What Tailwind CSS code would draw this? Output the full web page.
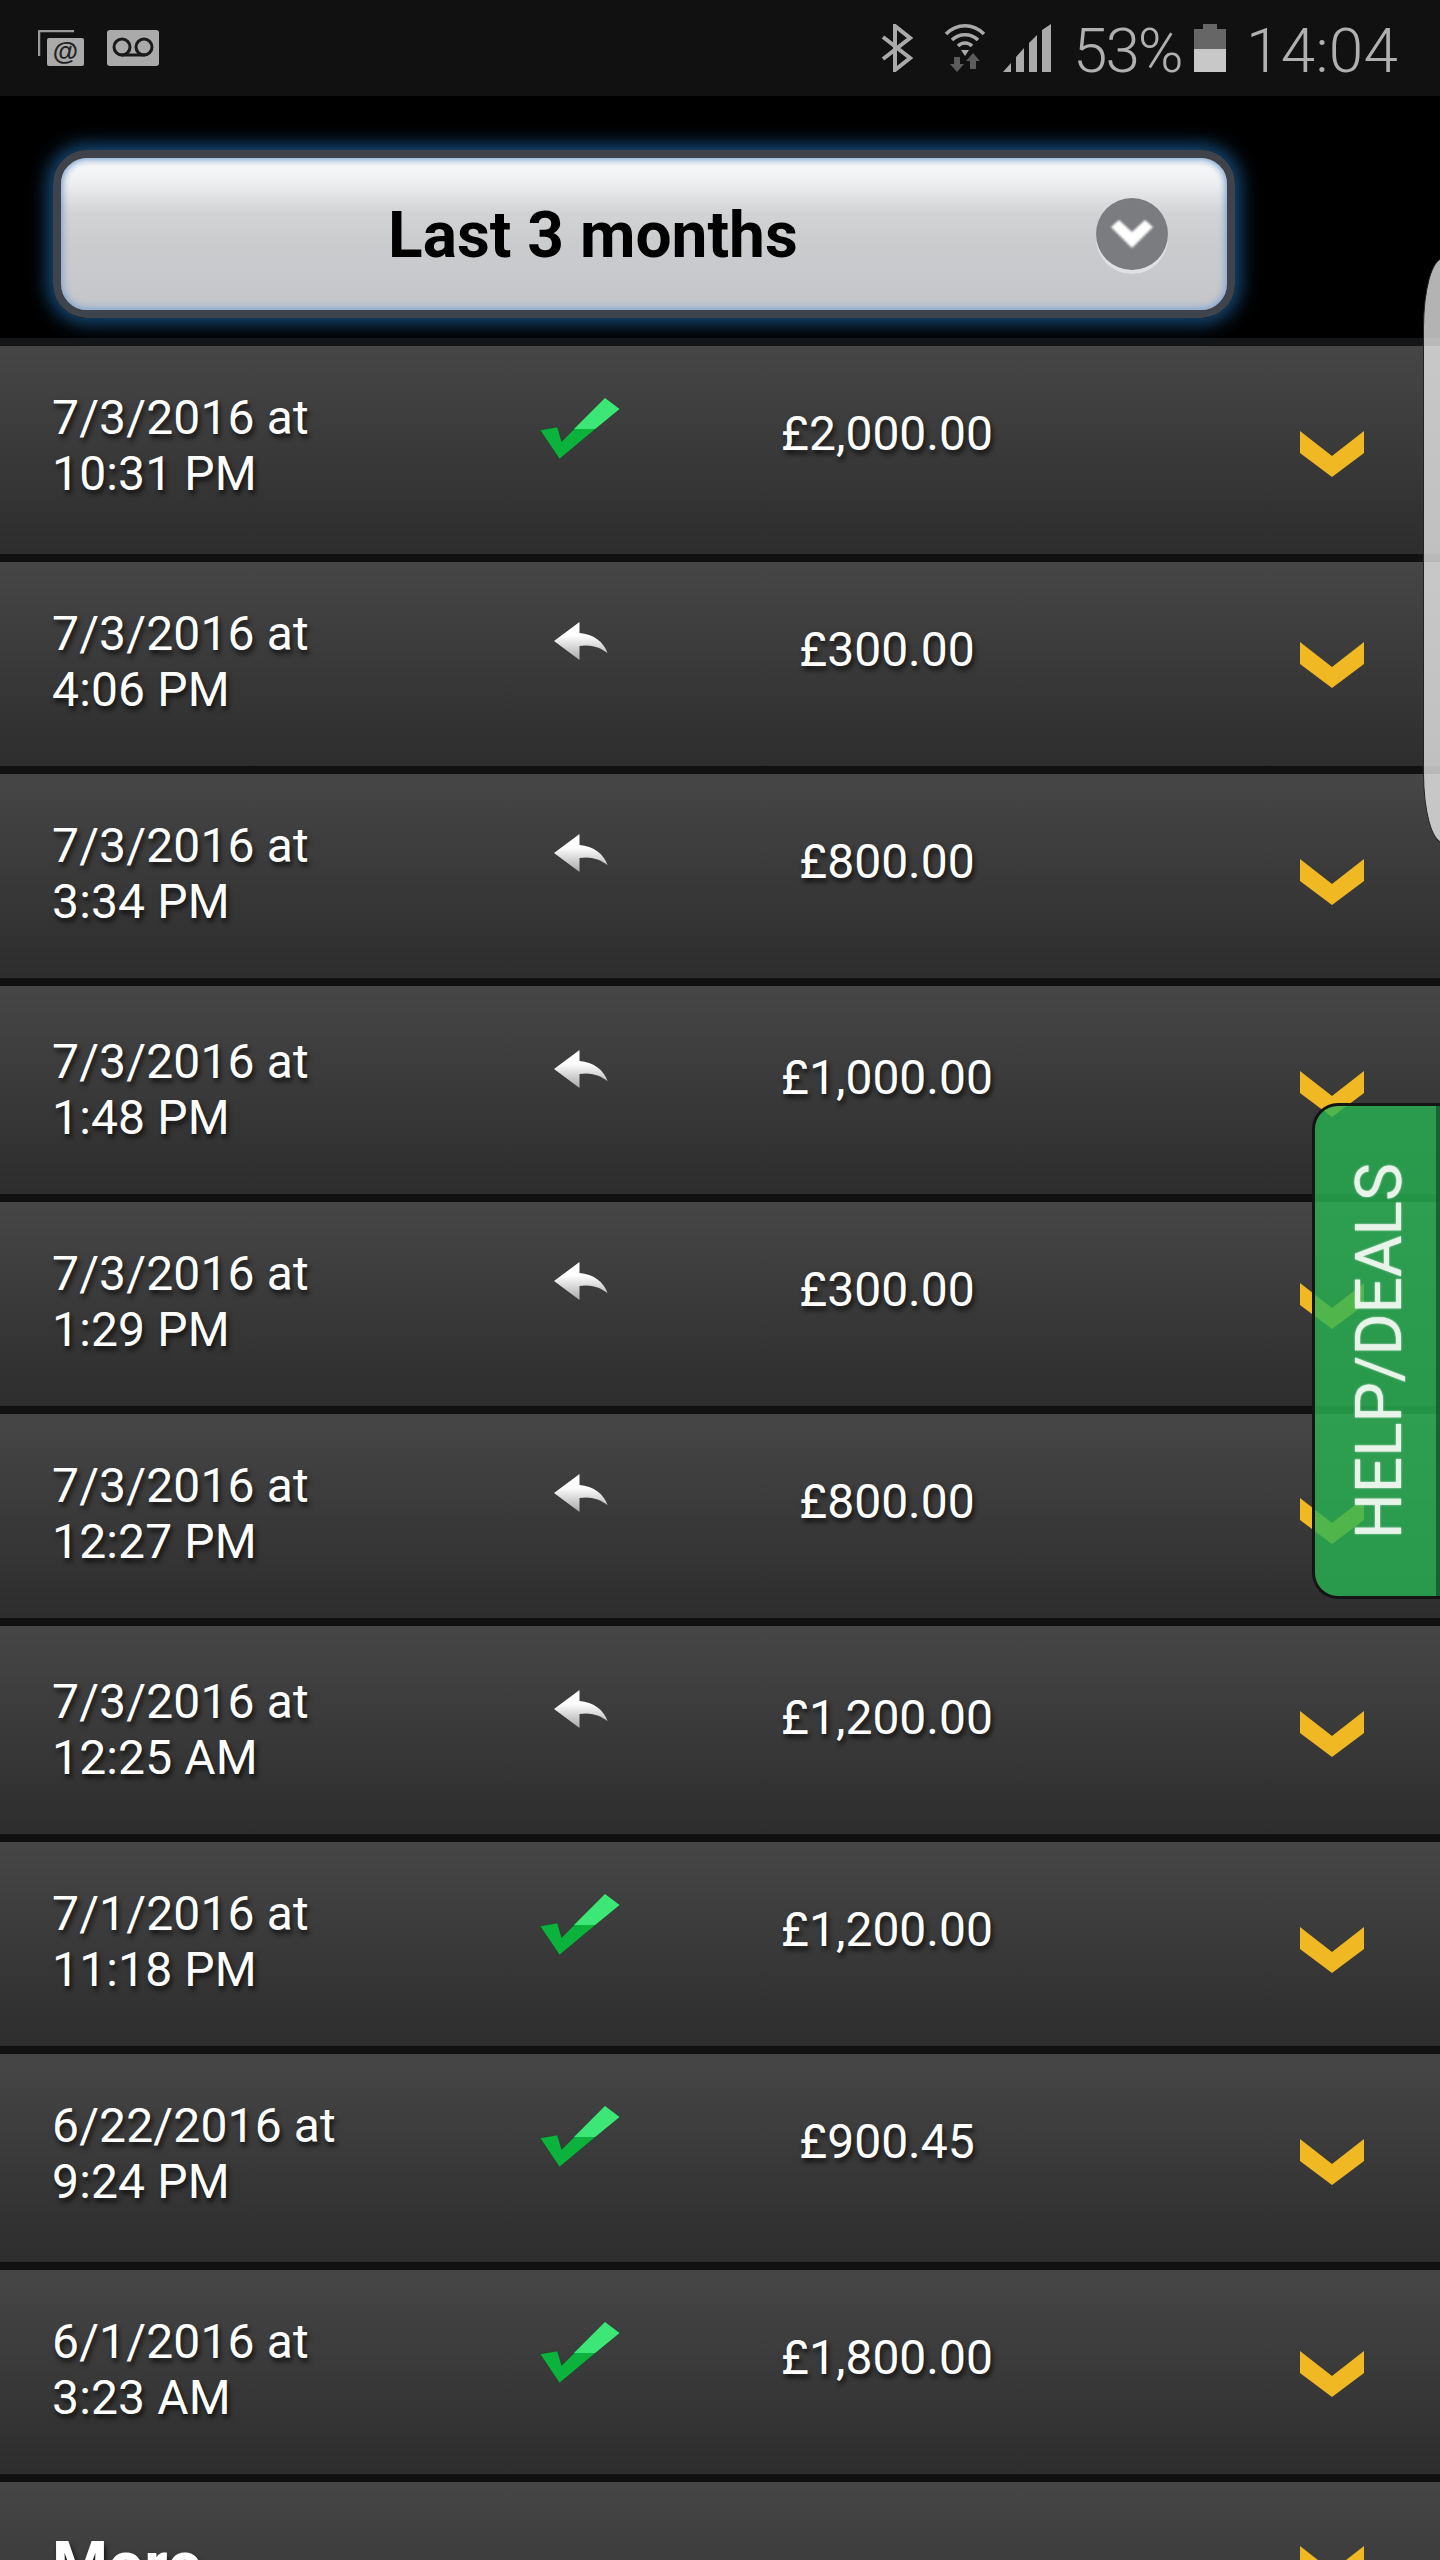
<!doctype html>
<html lang="en">
<head>
<meta charset="utf-8">
<title>Transactions</title>
<script src="https://cdn.jsdelivr.net/npm/@tailwindcss/browser@4"></script>
</head>
<body class="bg-black">
<svg width="0" height="0" class="absolute">
  <defs>
    <linearGradient id="reply-fill" x1="0" y1="0" x2="0" y2="1">
      <stop offset="0.35" stop-color="#ffffff"/>
      <stop offset="1" stop-color="#a8a8a8"/>
    </linearGradient>
    <symbol id="check" viewBox="0 0 80 62">
      <path d="M0 32 17.500 29 21.700 43.500 65 0 79.500 11 19.500 61Z" fill="#0bb23c" stroke="#222" stroke-opacity=".45" stroke-width=".8"/>
      <path d="M65 0 79.500 11 55 31 34 31Z" fill="#3de777"/>
    </symbol>
    <symbol id="reply" viewBox="0 0 54 38">
      <path d="M0 19 25.500 0 25.500 11C39 12 50 20 53.500 31 46 25 36 22 25.500 24L25.500 38Z" fill="url(#reply-fill)"/>
    </symbol>
    <symbol id="chevron" viewBox="0 0 64 46">
      <path d="M0 0 32 25 64 0 64 22 32 46 0 22Z" fill="#f0b823"/>
    </symbol>
  </defs>
</svg>

<div class="relative w-[1440px] h-[2560px] overflow-hidden font-['Roboto',sans-serif] text-white">

  <!-- status bar -->
  <div class="flex items-start h-[96px] bg-[#111111] text-[#b0b0b0]">
    <svg class="ml-[38px] mt-[30px]" width="46" height="36" viewBox="0 0 46 36">
      <path d="M1 26V2a1 1 0 0 1 1-1H36" fill="none" stroke="#9a9a9a" stroke-width="2.500"/>
      <rect x="9" y="8" width="37" height="28" rx="2" fill="#aaaaaa"/>
      <text x="27.500" y="30" text-anchor="middle" font-family="Liberation Sans" font-size="26" font-weight="700" fill="#222">@</text>
    </svg>
    <svg class="ml-[23px] mt-[30px]" width="52" height="36" viewBox="0 0 52 36">
      <rect width="52" height="36" rx="3" fill="#aaaaaa"/>
      <circle cx="15" cy="17" r="8" fill="none" stroke="#1a1a1a" stroke-width="3"/>
      <circle cx="37" cy="17" r="8" fill="none" stroke="#1a1a1a" stroke-width="3"/>
      <path d="M14 25H38" stroke="#1a1a1a" stroke-width="3"/>
    </svg>
    <svg class="ml-[722px] mt-[24px]" width="32" height="48" viewBox="0 0 32 48">
      <path d="M2 13 29 34 14 46V2L29 14 2 35" fill="none" stroke="#aaaaaa" stroke-width="4"/>
    </svg>
    <svg class="ml-[31px] mt-[23px]" width="42" height="49" viewBox="0 0 42 49">
      <path d="M2 11C13 0 29 0 40 11" fill="none" stroke="#aaaaaa" stroke-width="3.500"/>
      <path d="M8 17C15 10 27 10 34 17" fill="none" stroke="#aaaaaa" stroke-width="3.500"/>
      <path d="M14 23C18 19 24 19 28 23" fill="none" stroke="#aaaaaa" stroke-width="3.500"/>
      <path d="M17 27H25L21 33Z" fill="#aaaaaa"/>
      <path d="M10 34H16V41H20L13 49 6 41H10Z" fill="#5c5c5c"/>
      <path d="M26 46H32V38H36L29 30 22 38H26Z" fill="#5c5c5c"/>
    </svg>
    <svg class="ml-[17px] mt-[24px]" width="48" height="48" viewBox="0 0 48 48">
      <path d="M0 48 8 39V48ZM13 33 21 24V48H13ZM26 19 34 11V48H26ZM39 6 48 0V48H39Z" fill="#aaaaaa"/>
    </svg>
    <span class="ml-[22px] mt-[17px] w-[112px] text-[62px] leading-[68px] font-light tracking-[-2px]">53%</span>
    <svg class="ml-[9px] mt-[24px]" width="32" height="48" viewBox="0 0 32 48">
      <path d="M9 0H23V5H32V25H0V5H9Z" fill="#666666"/>
      <rect y="25" width="32" height="23" fill="#c8c8c8"/>
    </svg>
    <span class="ml-[20px] mt-[17px] text-[62px] leading-[68px] font-light tracking-[0.3px]">14:04</span>
  </div>

  <!-- period select -->
  <div class="h-[250px] bg-black border-b-8 border-[#141517] pt-[54px] pl-[53px]">
    <button type="button" class="flex items-center w-[1182px] h-[168px] rounded-[34px] border-8 border-[#3f434b] bg-[linear-gradient(#f4f5f6_8%,#eeeff0_16%,#d2d3d5_36%,#cbccce_55%,#c4c5c9_100%)] shadow-[0_0_18px_6px_#154a78,inset_0_0_6px_2px_#7fa6d2] text-black">
      <span class="ml-[327px] pt-[4px] text-[64px] leading-[72px] font-bold">Last 3 months</span>
      <span class="ml-auto mr-[59px] flex items-center justify-center size-[72px] rounded-full bg-[#7b7c7f] shadow-[0_4px_0_#dfe0e2]">
        <svg width="46" height="30" viewBox="0 0 46 30" class="blur-[1px]">
          <path d="M2 8 10 1 23 13 36 1 44 8 23 29Z" fill="#ffffff"/>
        </svg>
      </span>
    </button>
  </div>

  <!-- transactions -->
  <div class="text-[48px] leading-[56px] [text-shadow:2px_4px_5px_rgba(0,0,0,.7)]">

    <div class="grid grid-cols-[540px_80px_534px_1fr] h-[216px] border-b-8 border-[#111111] bg-[linear-gradient(#464646,#2d2d2d)]">
      <div class="pl-[52px] pt-[44px] tracking-[0.15px]">7/3/2016 at<br>10:31 PM</div>
      <svg class="mt-[52px] w-[80px] h-[62px]"><use href="#check"/></svg>
      <div class="pt-[60px] text-center">£2,000.00</div>
      <svg class="mt-[85px] ml-[146px] w-[64px] h-[46px]"><use href="#chevron"/></svg>
    </div>

    <div class="grid grid-cols-[540px_80px_534px_1fr] h-[212px] border-b-8 border-[#111111] bg-[linear-gradient(#464646,#2d2d2d)]">
      <div class="pl-[52px] pt-[44px] tracking-[0.15px]">7/3/2016 at<br>4:06 PM</div>
      <svg class="mt-[60px] ml-[14px] w-[54px] h-[38px]"><use href="#reply"/></svg>
      <div class="pt-[60px] text-center">£300.00</div>
      <svg class="mt-[80px] ml-[146px] w-[64px] h-[46px]"><use href="#chevron"/></svg>
    </div>

    <div class="grid grid-cols-[540px_80px_534px_1fr] h-[212px] border-b-8 border-[#111111] bg-[linear-gradient(#464646,#2d2d2d)]">
      <div class="pl-[52px] pt-[44px] tracking-[0.15px]">7/3/2016 at<br>3:34 PM</div>
      <svg class="mt-[60px] ml-[14px] w-[54px] h-[38px]"><use href="#reply"/></svg>
      <div class="pt-[60px] text-center">£800.00</div>
      <svg class="mt-[85px] ml-[146px] w-[64px] h-[46px]"><use href="#chevron"/></svg>
    </div>

    <div class="grid grid-cols-[540px_80px_534px_1fr] h-[216px] border-b-8 border-[#111111] bg-[linear-gradient(#464646,#2d2d2d)]">
      <div class="pl-[52px] pt-[48px] tracking-[0.15px]">7/3/2016 at<br>1:48 PM</div>
      <svg class="mt-[64px] ml-[14px] w-[54px] h-[38px]"><use href="#reply"/></svg>
      <div class="pt-[64px] text-center">£1,000.00</div>
      <svg class="mt-[85px] ml-[146px] w-[64px] h-[46px]"><use href="#chevron"/></svg>
    </div>

    <div class="grid grid-cols-[540px_80px_534px_1fr] h-[212px] border-b-8 border-[#111111] bg-[linear-gradient(#464646,#2d2d2d)]">
      <div class="pl-[52px] pt-[44px] tracking-[0.15px]">7/3/2016 at<br>1:29 PM</div>
      <svg class="mt-[60px] ml-[14px] w-[54px] h-[38px]"><use href="#reply"/></svg>
      <div class="pt-[60px] text-center">£300.00</div>
      <svg class="mt-[81px] ml-[146px] w-[64px] h-[46px]"><use href="#chevron"/></svg>
    </div>

    <div class="grid grid-cols-[540px_80px_534px_1fr] h-[212px] border-b-8 border-[#111111] bg-[linear-gradient(#464646,#2d2d2d)]">
      <div class="pl-[52px] pt-[44px] tracking-[0.15px]">7/3/2016 at<br>12:27 PM</div>
      <svg class="mt-[60px] ml-[14px] w-[54px] h-[38px]"><use href="#reply"/></svg>
      <div class="pt-[60px] text-center">£800.00</div>
      <svg class="mt-[84px] ml-[146px] w-[64px] h-[46px]"><use href="#chevron"/></svg>
    </div>

    <div class="grid grid-cols-[540px_80px_534px_1fr] h-[216px] border-b-8 border-[#111111] bg-[linear-gradient(#464646,#2d2d2d)]">
      <div class="pl-[52px] pt-[48px] tracking-[0.15px]">7/3/2016 at<br>12:25 AM</div>
      <svg class="mt-[64px] ml-[14px] w-[54px] h-[38px]"><use href="#reply"/></svg>
      <div class="pt-[64px] text-center">£1,200.00</div>
      <svg class="mt-[85px] ml-[146px] w-[64px] h-[46px]"><use href="#chevron"/></svg>
    </div>

    <div class="grid grid-cols-[540px_80px_534px_1fr] h-[212px] border-b-8 border-[#111111] bg-[linear-gradient(#464646,#2d2d2d)]">
      <div class="pl-[52px] pt-[44px] tracking-[0.15px]">7/1/2016 at<br>11:18 PM</div>
      <svg class="mt-[52px] w-[80px] h-[62px]"><use href="#check"/></svg>
      <div class="pt-[60px] text-center">£1,200.00</div>
      <svg class="mt-[85px] ml-[146px] w-[64px] h-[46px]"><use href="#chevron"/></svg>
    </div>

    <div class="grid grid-cols-[540px_80px_534px_1fr] h-[216px] border-b-8 border-[#111111] bg-[linear-gradient(#464646,#2d2d2d)]">
      <div class="pl-[52px] pt-[44px] tracking-[0.15px]">6/22/2016 at<br>9:24 PM</div>
      <svg class="mt-[52px] w-[80px] h-[62px]"><use href="#check"/></svg>
      <div class="pt-[60px] text-center">£900.45</div>
      <svg class="mt-[85px] ml-[146px] w-[64px] h-[46px]"><use href="#chevron"/></svg>
    </div>

    <div class="grid grid-cols-[540px_80px_534px_1fr] h-[212px] border-b-8 border-[#111111] bg-[linear-gradient(#464646,#2d2d2d)]">
      <div class="pl-[52px] pt-[44px] tracking-[0.15px]">6/1/2016 at<br>3:23 AM</div>
      <svg class="mt-[52px] w-[80px] h-[62px]"><use href="#check"/></svg>
      <div class="pt-[60px] text-center">£1,800.00</div>
      <svg class="mt-[81px] ml-[146px] w-[64px] h-[46px]"><use href="#chevron"/></svg>
    </div>

    <div class="flex items-start justify-between h-[216px] bg-[linear-gradient(#464646,#2d2d2d)]">
      <div class="pl-[52px] pt-[48px] text-[64px] leading-[72px] font-bold">More</div>
      <svg class="mt-[64px] mr-[76px] w-[64px] h-[46px]"><use href="#chevron"/></svg>
    </div>
  </div>

  <!-- edge handle, sits over the list -->
  <div class="absolute left-[1423px] top-[258px] w-[40px] h-[585px] rounded-l-[20px_70px] bg-white/70 border border-[#222222]"></div>

  <!-- help tab -->
  <div class="absolute left-[1312px] top-[1103px] flex items-center justify-center w-[128px] h-[496px] rounded-l-[26px] border-[3px] border-r-0 border-[#151515] bg-[rgba(40,180,84,0.8)]">
    <span class="pr-[4px] [writing-mode:vertical-rl] rotate-180 text-[64px] leading-[64px] text-[#e8f4ea] [text-shadow:0_0_2px_#e8f4ea]">HELP/DEALS</span>
    <span class="absolute right-0 inset-y-0 w-[4px] bg-[#14532d]/80"></span>
  </div>
</div>
</body>
</html>
